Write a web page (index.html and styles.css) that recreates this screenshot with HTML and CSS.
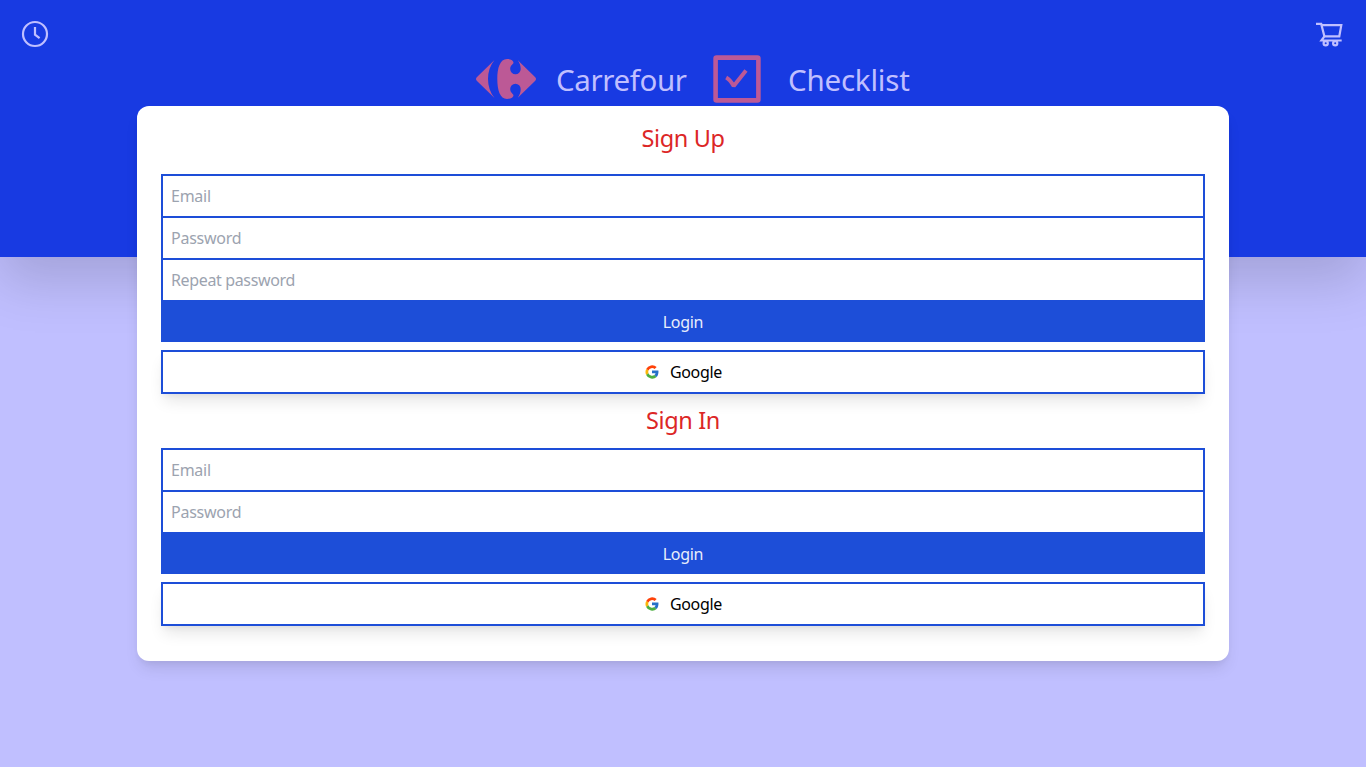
FILE: index.html
```html
<!DOCTYPE html>
<html lang="en">
<head>
<meta charset="utf-8">
<title>Carrefour Checklist</title>
<link rel="stylesheet" href="styles.css">
</head>
<body>
<header class="header">
  <nav class="nav">
    <svg class="nav-icon" viewBox="0 0 30 30"><circle cx="15" cy="15" r="12"/><path d="M15 8v7.7l4.6 3.5"/></svg>
    <svg class="nav-icon" viewBox="0 0 30 30"><path d="M2 4.9h5.200l3.200 12.400h14.900l2-11.100H7.600M10.400 17.300l-3 4.200h20.300"/><circle cx="11.7" cy="24.300" r="2.1"/><circle cx="21.2" cy="24.300" r="2.1"/></svg>
  </nav>
  <div class="brand">
    <svg class="logo" viewBox="0 0 60 40"><path d="M18.5 1 1 18Q-1 20 1 22L18.5 39Q12 31 12 20T18.5 1Z"/><path d="M31 0C24 0 21.3 9 21.3 20S24 40 31 40C35 40 37.5 38 37.5 36.2 37.5 34.8 34.2 34 34.2 30A5.2 5.2 0 0 1 44.7 30C44.7 33.5 43.5 36 41.8 38.7L59 22Q61 20 59 18L41.8 1.3C43.5 4 44.7 6.5 44.7 10A5.2 5.2 0 0 1 34.2 10C34.2 6 37.5 5.2 37.5 3.8 37.5 2 35 0 31 0Z"/></svg>
    <span class="brand-name">Carrefour</span>
    <svg class="check" viewBox="0 0 48 48"><rect x="2.6" y="2.6" width="42.8" height="42.8" rx="1"/><path d="M13.2 22.500Q17 24.500 20.700 31L33 15.500"/></svg>
    <span class="brand-name second">Checklist</span>
  </div>
</header>
<main class="card">
  <h2 class="title">Sign Up</h2>
  <form class="form">
    <input class="field email" placeholder="Email">
    <input class="field password" placeholder="Password">
    <input class="field repeat" placeholder="Repeat password">
    <button class="login" type="button">Login</button>
  </form>
  <button class="google" type="button">
    <svg class="g-icon" viewBox="0 0 48 48"><path fill="#ff4108" d="M4 14A23 23 0 0 1 40 7l-7 7A13 13 0 0 0 12 19Z"/><path fill="#fbb508" d="M4 14a23 23 0 0 0 0 20l8-6a13 13 0 0 1 0-9Z"/><path fill="#4caf40" d="M4 34a23 23 0 0 0 36 7l-8-7a13 13 0 0 1-20-6Z"/><path fill="#2470c8" d="M24 19h22c1 8-1 17-6 22l-8-7q4-3 4-6H24Z"/></svg>
    <span>Google</span>
  </button>
  <h2 class="title signin">Sign In</h2>
  <form class="form">
    <input class="field email" placeholder="Email">
    <input class="field password" placeholder="Password">
    <button class="login" type="button">Login</button>
  </form>
  <button class="google" type="button">
    <svg class="g-icon" viewBox="0 0 48 48"><path fill="#ff4108" d="M4 14A23 23 0 0 1 40 7l-7 7A13 13 0 0 0 12 19Z"/><path fill="#fbb508" d="M4 14a23 23 0 0 0 0 20l8-6a13 13 0 0 1 0-9Z"/><path fill="#4caf40" d="M4 34a23 23 0 0 0 36 7l-8-7a13 13 0 0 1-20-6Z"/><path fill="#2470c8" d="M24 19h22c1 8-1 17-6 22l-8-7q4-3 4-6H24Z"/></svg>
    <span>Google</span>
  </button>
</main>
</body>
</html>
```
FILE: styles.css
```css
* { box-sizing: border-box; }
body {
  margin: 0;
  height: 767px;
  overflow: hidden;
  background: #c0bfff;
  font-family: "Noto Sans", sans-serif;
  font-size: 16px;
}
.header {
  height: 257px;
  background: #183ae2;
  box-shadow: 0 25px 50px rgba(0, 0, 0, .15);
}
.nav {
  display: flex;
  justify-content: space-between;
  height: 54px;
  padding: 19px 22px 0 20px;
}
.nav-icon {
  width: 30px;
  height: 30px;
  fill: none;
  stroke: #c0bfff;
  stroke-width: 2.2;
}
.brand {
  display: flex;
  align-items: center;
  height: 50px;
  padding-left: 476px;
}
.logo { width: 60px; height: 40px; fill: #bc5996; margin-right: 20px; }
.brand-name {
  width: 131px;
  margin-right: 26px;
  color: #c0bfff;
  font-size: 29.5px;
  font-weight: 400;
  line-height: 48px;
  letter-spacing: -.38px;
  white-space: nowrap;
  padding-top: 2px;
}
.second { letter-spacing: -.2px; }
.check {
  width: 48px;
  height: 48px;
  margin-right: 27px;
  fill: none;
  stroke: #bc5996;
  stroke-width: 4.6;
}
.check path { stroke-width: 4; stroke-linejoin: bevel; }
.card {
  display: flex;
  flex-direction: column;
  width: 1092px;
  height: 555px;
  margin: -151px auto 0;
  padding: 16px 24px 0;
  position: relative;
  background: #fff;
  border-radius: 12px;
  box-shadow: 0 10px 15px -3px rgba(0, 0, 0, .1), 0 4px 6px -2px rgba(0, 0, 0, .05);
}
.title {
  margin: 0 0 20px;
  color: #dc2626;
  font-size: 23.5px;
  font-weight: 400;
  line-height: 32px;
  letter-spacing: -.35px;
  text-align: center;
}
.signin { margin: 10px 0 12px; }
.form { display: flex; flex-direction: column; margin: 0 0 8px; }
.field {
  height: 44px;
  margin: 0 0 -2px;
  padding: 0 8px;
  border: 2px solid #1d4ed8;
  border-radius: 0;
  background: #fff;
  font: inherit;
  letter-spacing: -.25px;
}
.repeat { letter-spacing: -.36px; }
.field::placeholder { color: #9ca3af; opacity: 1; }
.login {
  position: relative;
  height: 42px;
  padding: 2px 0 0;
  border: 0;
  background: #1d4ed8;
  color: #e8edfb;
  font: inherit;
  letter-spacing: -.3px;
}
.google {
  display: flex;
  flex: none;
  align-items: center;
  justify-content: center;
  gap: 11px;
  height: 44px;
  padding: 0 0 0 1px;
  border: 2px solid #1d4ed8;
  background: #fff;
  color: #000;
  font: inherit;
  letter-spacing: -.3px;
  box-shadow: 0 10px 15px -3px rgba(0, 0, 0, .1), 0 4px 6px -2px rgba(0, 0, 0, .05);
}
.g-icon { width: 14px; height: 14px; }
```
